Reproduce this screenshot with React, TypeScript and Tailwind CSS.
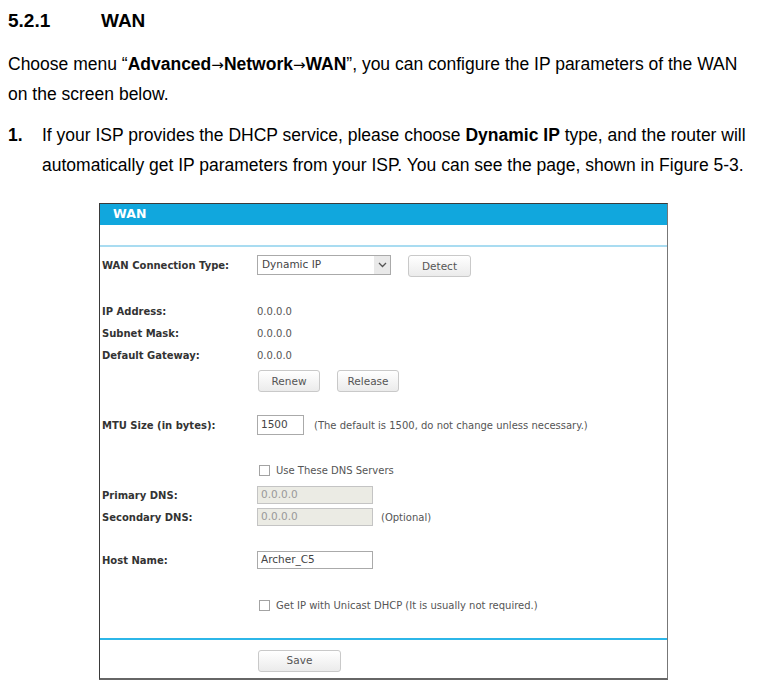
import React from "react";

const label = "text-[10px] font-bold text-[#333]";
const value = "text-[10px] text-[#555]";

function Btn({ children, w }: { children: React.ReactNode; w: string }) {
  return (
    <button
      className={`${w} h-[22px] rounded-[3px] border border-[#c9c9c9] bg-gradient-to-b from-white to-[#ebebeb] text-[10.5px] text-[#555]`}
    >
      {children}
    </button>
  );
}

function Check({ text }: { text: string }) {
  return (
    <div className="flex items-center gap-[6px] pl-[2px]">
      <span className="w-[11px] h-[11px] border border-[#a3a3a3] bg-white" />
      <span className={value}>{text}</span>
    </div>
  );
}

function Row({
  name,
  mt,
  children,
}: {
  name?: string;
  mt: string;
  children?: React.ReactNode;
}) {
  return (
    <div className={`${mt} h-[22px] flex items-center`}>
      <div className={`w-[157px] pl-[2px] ${label}`}>{name}</div>
      <div className="flex items-center">{children}</div>
    </div>
  );
}

const Arrow = () => (
  <span className="font-['DejaVu_Sans'] text-[15px] leading-none font-normal">→</span>
);

function WanPanel() {
  return (
    <div
      className="ml-[99px] w-[569px] border border-[#3a3a3a] border-r-[#777] border-b-[#666] border-b-2 bg-white"
      style={{ fontFamily: '"DejaVu Sans", Verdana, sans-serif' }}
    >
      <div className="h-[21px] bg-[#11a7dd] pl-[13px] flex items-center text-[12.5px] font-bold text-white">
        WAN
      </div>
      <div className="mt-[20px] h-[2px] bg-[#a9dcf1]" />

      <Row name="WAN Connection Type:" mt="mt-[7px]">
        <div className="w-[134px] h-[20px] border border-[#aaa] flex items-center justify-between">
          <span className="pl-[4px] text-[10.5px] text-[#444]">Dynamic IP</span>
          <span className="w-[16px] h-full bg-[#e9e9e9] flex items-center justify-center">
            <svg width="9" height="6" viewBox="0 0 9 6">
              <path d="M1 1l3.5 3.5L8 1" fill="none" stroke="#555" strokeWidth="1.3" />
            </svg>
          </span>
        </div>
        <span className="ml-[17px]">
          <Btn w="w-[63px]">Detect</Btn>
        </span>
      </Row>

      <Row name="IP Address:" mt="mt-[24px]">
        <span className={value}>0.0.0.0</span>
      </Row>
      <Row name="Subnet Mask:" mt="mt-0">
        <span className={value}>0.0.0.0</span>
      </Row>
      <Row name="Default Gateway:" mt="mt-0">
        <span className={value}>0.0.0.0</span>
      </Row>
      <Row mt="mt-[3px]">
        <span className="ml-[1px]">
          <Btn w="w-[62px]">Renew</Btn>
        </span>
        <span className="ml-[17px]">
          <Btn w="w-[62px]">Release</Btn>
        </span>
      </Row>

      <Row name="MTU Size (in bytes):" mt="mt-[23px]">
        <div className="w-[47px] h-[20px] border border-[#aaa] flex items-center pl-[3px] text-[10.5px] text-[#444]">
          1500
        </div>
        <span className={`ml-[10px] ${value}`}>
          (The default is 1500, do not change unless necessary.)
        </span>
      </Row>

      <Row mt="mt-[23px]">
        <Check text="Use These DNS Servers" />
      </Row>
      <Row name="Primary DNS:" mt="mt-[3px]">
        <div className="w-[116px] h-[18px] border border-[#c4c4c4] bg-[#ebebe4] flex items-center pl-[3px] text-[10.5px] text-[#999]">
          0.0.0.0
        </div>
      </Row>
      <Row name="Secondary DNS:" mt="mt-0">
        <div className="w-[116px] h-[18px] border border-[#c4c4c4] bg-[#ebebe4] flex items-center pl-[3px] text-[10.5px] text-[#999]">
          0.0.0.0
        </div>
        <span className={`ml-[8px] ${value}`}>(Optional)</span>
      </Row>

      <Row name="Host Name:" mt="mt-[21px]">
        <div className="w-[116px] h-[18px] border border-[#aaa] flex items-center pl-[3px] text-[10.5px] text-[#444]">
          Archer_C5
        </div>
      </Row>

      <Row mt="mt-[23px]">
        <Check text="Get IP with Unicast DHCP (It is usually not required.)" />
      </Row>

      <div className="mt-[22px] h-[2px] bg-[#2cb6e8]" />
      <div className="pl-[158px] pt-[7px] pb-[6px]">
        <Btn w="w-[83px]">Save</Btn>
      </div>
    </div>
  );
}

export default function App() {
  return (
    <div
      className="w-[776px] h-[690px] bg-white text-black overflow-hidden"
      style={{ fontFamily: '"Liberation Sans", Arial, sans-serif' }}
    >
      <h1 className="pl-[8px] pt-[8px] h-[32px] flex items-center text-[19px] font-bold leading-none">
        <span className="w-[93px]">5.2.1</span>
        <span>WAN</span>
      </h1>
      <p className="mt-[17px] px-[8px] text-[17.5px] leading-[30px] whitespace-nowrap">
        Choose menu “
        <b>
          Advanced
          <Arrow />
          Network
          <Arrow />
          WAN
        </b>
        ”, you can configure the IP parameters of the WAN
        <br />
        on the screen below.
      </p>
      <div className="mt-[11px] flex px-[8px] text-[17.5px] leading-[30px] whitespace-nowrap">
        <span className="w-[34px] font-bold">1.</span>
        <p className="flex-1">
          If your ISP provides the DHCP service, please choose <b>Dynamic IP</b> type, and the router will
          <br />
          automatically get IP parameters from your ISP. You can see the page, shown in Figure 5-3.
        </p>
      </div>
      <div className="mt-[23px]">
        <WanPanel />
      </div>
    </div>
  );
}
